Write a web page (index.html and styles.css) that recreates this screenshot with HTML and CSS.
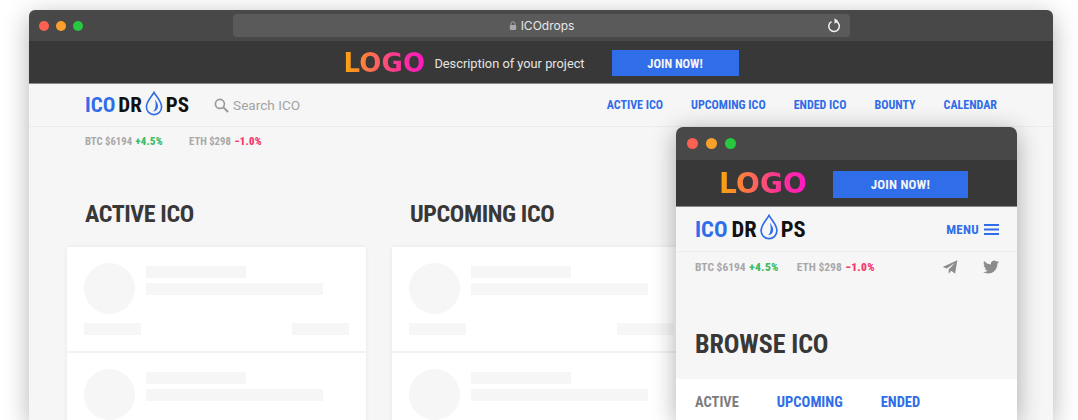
FILE: index.html
```html
<!DOCTYPE html>
<html lang="en">
<head>
    <meta charset="UTF-8">
    <title>ICOdrops</title>
    <link rel="stylesheet" href="styles.css">
</head>
<body>

<svg class="defs" width="0" height="0">
    <symbol id="drop" viewBox="0 0 20 28">
        <path d="M10 1.500C7 7 1.500 11.500 1.500 18a8.500 8.500 0 0 0 17 0C18.500 11.500 13 7 10 1.500Z" fill="none" stroke="currentColor" stroke-width="1.800"/>
        <path d="M11 9.500c3 4 4.500 7 2.800 10.500-1 2-3 3-5 3 3-2 3.800-7 2.200-13.500Z" fill="currentColor"/>
    </symbol>
</svg>

<div class="window">
    <div class="titlebar">
        <div class="dots">
            <span class="dot red"></span>
            <span class="dot orange"></span>
            <span class="dot green"></span>
        </div>
        <div class="urlbar">
            <svg class="lock" viewBox="0 0 10 11" width="8" height="9">
                <path d="M2.500 5V3.300a2.500 2.500 0 0 1 5 0V5" fill="none" stroke="#a8a8a8" stroke-width="1.200"/>
                <rect x="1" y="5" width="8" height="6" rx="1" fill="#a8a8a8"/>
            </svg>
            <span>ICOdrops</span>
            <svg class="reload" viewBox="0 0 14 15" width="14" height="15">
                <path d="M4.500 3.600a5.300 5.300 0 1 0 4.500-.300" fill="none" stroke="#f2f2f2" stroke-width="1.500"/>
                <path d="M7.500 .3v5.400l3.800-2.700z" fill="#f2f2f2"/>
            </svg>
        </div>
    </div>

    <div class="banner">
        <span class="promo-logo">LOGO</span>
        <span class="promo-text">Description of your project</span>
        <a href="#" class="join-button">JOIN NOW!</a>
    </div>

    <nav class="navbar">
        <div class="brand">
            <span class="brand-blue">ICO</span><span>DR</span><svg class="brand-drop"><use href="#drop"/></svg><span>PS</span>
        </div>
        <div class="search">
            <svg viewBox="0 0 16 16" width="15" height="15">
                <circle cx="6.300" cy="6.300" r="4.800" fill="none" stroke="#9a9a9a" stroke-width="1.800"/>
                <path d="M10 10l5 5" stroke="#9a9a9a" stroke-width="2.200"/>
            </svg>
            <span>Search ICO</span>
        </div>
        <div class="nav-links">
            <a href="#">ACTIVE ICO</a>
            <a href="#">UPCOMING ICO</a>
            <a href="#">ENDED ICO</a>
            <a href="#">BOUNTY</a>
            <a href="#">CALENDAR</a>
        </div>
    </nav>

    <div class="ticker">
        <span class="coin">BTC $6194 <b class="up">+4.5%</b></span>
        <span class="coin">ETH $298 <b class="down">−1.0%</b></span>
    </div>

    <div class="columns">
        <section class="column">
            <h2>ACTIVE ICO</h2>
            <div class="card-list">
                <div class="card">
                    <div class="card-top">
                        <div class="avatar"></div>
                        <div class="lines"><div class="bar short"></div><div class="bar long"></div></div>
                    </div>
                    <div class="card-bottom"><div class="bar tiny"></div><div class="bar tiny"></div></div>
                </div>
                <div class="card">
                    <div class="card-top">
                        <div class="avatar"></div>
                        <div class="lines"><div class="bar short"></div><div class="bar long"></div></div>
                    </div>
                </div>
            </div>
        </section>
        <section class="column">
            <h2>UPCOMING ICO</h2>
            <div class="card-list">
                <div class="card">
                    <div class="card-top">
                        <div class="avatar"></div>
                        <div class="lines"><div class="bar short"></div><div class="bar long"></div></div>
                    </div>
                    <div class="card-bottom"><div class="bar tiny"></div><div class="bar tiny"></div></div>
                </div>
                <div class="card">
                    <div class="card-top">
                        <div class="avatar"></div>
                        <div class="lines"><div class="bar short"></div><div class="bar long"></div></div>
                    </div>
                </div>
            </div>
        </section>
    </div>
</div>

<div class="window mobile">
    <div class="titlebar">
        <div class="dots">
            <span class="dot red"></span>
            <span class="dot orange"></span>
            <span class="dot green"></span>
        </div>
    </div>

    <div class="banner">
        <span class="promo-logo">LOGO</span>
        <a href="#" class="join-button">JOIN NOW!</a>
    </div>

    <nav class="navbar">
        <div class="brand">
            <span class="brand-blue">ICO</span><span>DR</span><svg class="brand-drop"><use href="#drop"/></svg><span>PS</span>
        </div>
        <a href="#" class="menu">
            MENU
            <svg viewBox="0 0 15 11" width="15" height="11">
                <path d="M0 1h15M0 5.500h15M0 10h15" stroke="#306de9" stroke-width="1.800"/>
            </svg>
        </a>
    </nav>

    <div class="ticker">
        <span class="coin">BTC $6194 <b class="up">+4.5%</b></span>
        <span class="coin">ETH $298 <b class="down">−1.0%</b></span>
        <div class="socials">
            <svg viewBox="0 0 24 22" width="16" height="14">
                <path d="M23.500 .5 .5 11l6.500 2.500L20 4.500 10 15v6.500l4-4.500 6 4.500z" fill="#8c8c8c"/>
            </svg>
            <svg viewBox="0 0 24 24" width="16" height="16">
                <path d="M23.953 4.570a10 10 0 0 1-2.825.775 4.958 4.958 0 0 0 2.163-2.723c-.951.555-2.005.959-3.127 1.184a4.920 4.920 0 0 0-8.384 4.482C7.690 8.095 4.067 6.130 1.640 3.162a4.822 4.822 0 0 0-.666 2.475c0 1.710.870 3.213 2.188 4.096a4.904 4.904 0 0 1-2.228-.616v.060a4.923 4.923 0 0 0 3.946 4.827 4.996 4.996 0 0 1-2.212.085 4.936 4.936 0 0 0 4.604 3.417 9.867 9.867 0 0 1-6.102 2.105c-.390 0-.779-.023-1.170-.067a13.995 13.995 0 0 0 7.557 2.209c9.053 0 13.998-7.496 13.998-13.985 0-.210 0-.420-.015-.630A9.935 9.935 0 0 0 24 4.590z" fill="#8c8c8c"/>
            </svg>
        </div>
    </div>

    <h2>BROWSE ICO</h2>

    <div class="tabs">
        <a href="#" class="tab current">ACTIVE</a>
        <a href="#" class="tab">UPCOMING</a>
        <a href="#" class="tab">ENDED</a>
    </div>
</div>

</body>
</html>
```

FILE: styles.css
```css
html, body {
    height: 420px;
    overflow: hidden;
}
body {
    margin: 0;
    background: #fff;
    font-family: 'Roboto', sans-serif;
    font-stretch: 85%;
    color: #383838;
    position: relative;
}
a {
    text-decoration: none;
}
.defs {
    position: absolute;
}

/* windows */
.window {
    margin: 10px 25px 0 29px;
    height: 410px;
    background: #f6f6f6;
    border-radius: 6px 6px 0 0;
    box-shadow: 0 6px 26px rgba(0, 0, 0, 0.3);
    overflow: hidden;
}
.titlebar {
    height: 31px;
    background: #484848;
    position: relative;
    display: flex;
    align-items: center;
}
.dots {
    display: flex;
    gap: 7px;
    padding-left: 10px;
}
.dot {
    width: 10px;
    height: 10px;
    border-radius: 50%;
}
.red { background: #fc6152; }
.orange { background: #fca02c; }
.green { background: #28c840; }

.urlbar {
    position: absolute;
    left: 204px;
    top: 4px;
    width: 617px;
    height: 23px;
    background: #5a5a5a;
    border-radius: 4px;
    display: flex;
    align-items: center;
    justify-content: center;
    gap: 4px;
    color: #e8e8e8;
    font-family: 'Inter', sans-serif;
    font-stretch: normal;
    font-size: 12px;
}
.reload {
    position: absolute;
    right: 9px;
    top: 4px;
}

/* promo banner */
.banner {
    box-sizing: border-box;
    height: 43px;
    padding-top: 2px;
    background: #383838;
    border-bottom: 1px solid #888;
    display: flex;
    align-items: center;
    justify-content: center;
}
.promo-logo {
    font-family: 'DejaVu Sans', sans-serif;
    font-stretch: normal;
    font-weight: 700;
    font-size: 26px;
    line-height: 1;
    letter-spacing: 0.2px;
    background: linear-gradient(to right, #f9a70a 0%, #ff6f4f 35%, #fb3a8f 62%, #ff17c4 100%);
    -webkit-background-clip: text;
    background-clip: text;
    color: transparent;
}
.promo-text {
    margin-left: 9px;
    color: #e4e4e4;
    font-stretch: normal;
    font-size: 12.800px;
}
.join-button {
    margin-left: 27px;
    width: 127px;
    height: 26px;
    background: #306de9;
    color: #f4f4f4;
    font-size: 12.500px;
    font-weight: 700;
    display: flex;
    align-items: center;
    justify-content: center;
}

/* nav */
.navbar {
    height: 42px;
    padding: 0 56px;
    border-bottom: 1px solid #ececec;
    display: flex;
    align-items: center;
}
.brand {
    display: flex;
    align-items: center;
    font-size: 21px;
    font-weight: 700;
    color: #111;
}
.brand-blue {
    color: #306de9;
    margin-right: 3px;
}
.brand-drop {
    width: 18px;
    height: 25px;
    margin: -4px 3px 0;
    color: #306de9;
}
.search {
    margin-left: 25px;
    display: flex;
    align-items: center;
    gap: 4px;
    color: #a3a3a3;
    font-stretch: normal;
    font-size: 13.600px;
}
.nav-links {
    margin-left: auto;
    display: flex;
    gap: 28px;
}
.nav-links a, .menu {
    color: #306de9;
    font-size: 12px;
    font-weight: 700;
}

/* prices */
.ticker {
    padding: 8px 56px 0;
    display: flex;
    align-items: center;
    gap: 26px;
    font-size: 10.700px;
    font-weight: 700;
    color: #a8a8a8;
}
.up, .down {
    margin-left: 1px;
    letter-spacing: 0.3px;
}
.up { color: #3fbc5f; }
.down { color: #f7376f; }

/* ICO lists */
.columns {
    display: flex;
    gap: 26px;
    padding: 53px 0 0 38px;
}
.column {
    width: 299px;
    flex-shrink: 0;
}
h2 {
    margin: 0;
    font-size: 24px;
    line-height: 27px;
    font-weight: 700;
    letter-spacing: -0.4px;
    color: #383838;
}
.column h2 {
    padding-left: 18px;
}
.card-list {
    margin-top: 19px;
    background: #fff;
    box-shadow: 0 0 4px rgba(0, 0, 0, 0.07);
}
.card {
    padding: 16px 17px;
    border-bottom: 2px solid #f2f2f2;
}
.card-top {
    display: flex;
    gap: 11px;
}
.avatar {
    width: 51px;
    height: 51px;
    border-radius: 50%;
    background: #f6f6f6;
}
.lines {
    padding-top: 3px;
    display: flex;
    flex-direction: column;
    gap: 5px;
}
.bar {
    height: 12px;
    background: #f6f6f6;
}
.short { width: 100px; }
.long { width: 177px; }
.tiny { width: 57px; }
.card-bottom {
    margin-top: 9px;
    display: flex;
    justify-content: space-between;
}

/* phone sized window on top */
.mobile {
    position: absolute;
    left: 676px;
    top: 127px;
    width: 341px;
    height: 293px;
    margin: 0;
    border-radius: 7px 7px 0 0;
    box-shadow: 0 4px 24px rgba(0, 0, 0, 0.32);
}
.mobile .titlebar {
    height: 33px;
}
.mobile .dots {
    gap: 8px;
    padding-left: 11px;
}
.mobile .dot {
    width: 11px;
    height: 11px;
}
.mobile .banner {
    height: 47px;
    padding: 2px 6px 0 0;
}
.mobile .promo-logo {
    font-size: 28px;
    letter-spacing: 0.1px;
}
.mobile .join-button {
    margin-left: 26px;
    width: 135px;
    height: 27px;
    font-size: 13px;
    letter-spacing: 0.2px;
}
.mobile .navbar {
    height: 44px;
    padding: 0 18px 0 19px;
    justify-content: space-between;
}
.mobile .brand {
    font-size: 22.500px;
}
.mobile .brand-blue {
    margin-right: 4px;
}
.mobile .brand-drop {
    width: 20px;
    height: 26px;
    margin: -4px 2px 0;
}
.menu {
    display: flex;
    align-items: center;
    gap: 5px;
    font-size: 13px;
    letter-spacing: 0.3px;
}
.mobile .ticker {
    padding: 7px 18px 0 19px;
    gap: 18px;
    font-size: 11.500px;
}
.socials {
    margin-left: auto;
    display: flex;
    align-items: center;
    gap: 25px;
}
.mobile h2 {
    margin-top: 54px;
    padding-left: 19px;
    font-size: 26px;
    line-height: 30px;
    letter-spacing: -0.1px;
}
.tabs {
    margin-top: 20px;
    background: #fff;
    padding: 15px 19px;
    display: flex;
    gap: 38px;
}
.tab {
    color: #306de9;
    font-size: 14.500px;
    font-weight: 700;
}
.tab.current {
    color: #7d7d7d;
}
```
